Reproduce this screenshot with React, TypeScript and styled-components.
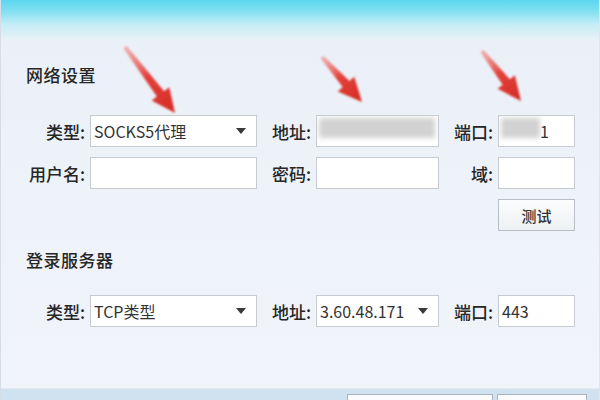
import React from 'react';
import styled, { createGlobalStyle } from 'styled-components';

const Global = createGlobalStyle`
    html, body {
        margin: 0;
        padding: 0;
        background: #eef2f9;
    }
    * { box-sizing: border-box; }
`;

const font = `"Microsoft YaHei", "Noto Sans CJK SC", "Noto Sans", sans-serif`;

const Styles = {
    Window: styled.div`
        position: relative;
        width: 600px;
        height: 400px;
        overflow: hidden;
        display: flex;
        flex-direction: column;
        background: linear-gradient(180deg, #eaf0f8 0%, #eef2f9 50%, #f1f4fa 100%);
        border-left: 1px solid #d6dde6;
        border-right: 1px solid #dfe5ec;
        font-family: ${font};
        color: #333;
    `,

    TitleBar: styled.div`
        height: 40px;
        flex-shrink: 0;
        background: linear-gradient(180deg, #5ad6ee 0%, #86e1f2 30%, #c6edf6 62%, #e9f1f8 100%);
    `,

    Content: styled.div`
        flex: 1;
        padding: 23px 0 0 20px;
    `,

    Heading: styled.h2<{ $gap: number }>`
        margin: 0 0 ${p => p.$gap}px 5px;
        font-size: 17px;
        line-height: 24px;
        font-weight: 500;
        color: #262626;
        letter-spacing: 0.5px;
    `,

    Grid: styled.div<{ $bottom: number }>`
        display: grid;
        grid-template-columns: 65px 167px 51px 123px 51px 77px;
        grid-auto-rows: 32px;
        column-gap: 4px;
        row-gap: 10px;
        margin-bottom: ${p => p.$bottom}px;
    `,

    Label: styled.label`
        display: flex;
        align-items: center;
        justify-content: flex-end;
        padding-right: 1px;
        font-size: 17px;
        font-weight: 500;
        color: #262626;
        white-space: nowrap;
    `,

    Field: styled.div`
        position: relative;
        display: flex;
        align-items: center;
        overflow: hidden;
        background: #fff;
        border: 1px solid #c6cad1;
        padding: 0 3px;
        font-size: 16px;
        color: #333;
    `,

    Caret: styled.span`
        margin-left: auto;
        margin-right: 7px;
        width: 0;
        height: 0;
        border-left: 5px solid transparent;
        border-right: 5px solid transparent;
        border-top: 6px solid #3a3a3a;
    `,

    Blur: styled.div<{ $w: string }>`
        position: absolute;
        left: 2px;
        top: 2px;
        height: 20px;
        width: ${p => p.$w};
        background: #d2d2d2;
        filter: blur(2.5px);
    `,

    Value: styled.span<{ $right?: boolean }>`
        position: relative;
        margin-left: ${p => (p.$right ? 'auto' : '0')};
        margin-right: ${p => (p.$right ? '22px' : '0')};
    `,

    Button: styled.button`
        grid-column: 6;
        font-family: ${font};
        font-size: 15px;
        font-weight: 500;
        color: #333;
        background: linear-gradient(180deg, #fbfcfd 0%, #eef1f4 100%);
        border: 1px solid #b9bec6;
        padding: 0;
    `,

    Footer: styled.div`
        height: 12px;
        flex-shrink: 0;
        display: flex;
        justify-content: flex-end;
        gap: 4px;
        padding: 5px 12px 0 0;
        background: #d0e2f0;
        border-top: 1px solid #e2ebf3;
        overflow: hidden;
    `,

    FooterButton: styled.button<{ $w: number }>`
        width: ${p => p.$w}px;
        height: 28px;
        flex-shrink: 0;
        font-family: ${font};
        font-size: 14px;
        background: #f9fbfd;
        border: 1px solid #a9b2bd;
    `,

    Overlay: styled.svg`
        position: absolute;
        left: 0;
        top: 0;
        pointer-events: none;
    `,
};

type Pt = [number, number];

const arrowPoints = (tail: Pt, tip: Pt) => {
    const dx = tip[0] - tail[0];
    const dy = tip[1] - tail[1];
    const len = Math.hypot(dx, dy);
    const ux = dx / len;
    const uy = dy / len;
    const nx = -uy;
    const ny = ux;
    const neck: Pt = [tip[0] - ux * 24, tip[1] - uy * 24];
    const at = (p: Pt, s: number): string => `${(p[0] + nx * s).toFixed(1)},${(p[1] + ny * s).toFixed(1)}`;
    return [
        at(tail, 2),
        at(neck, 4.5),
        at(neck, 11),
        `${tip[0]},${tip[1]}`,
        at(neck, -11),
        at(neck, -4.5),
        at(tail, -2),
    ].join(' ');
};

const arrows: { tail: Pt; tip: Pt }[] = [
    { tail: [124, 47], tip: [174, 113] },
    { tail: [321, 57], tip: [361, 102] },
    { tail: [481, 51], tip: [520, 101] },
];

const Arrows: React.FC = () => (
    <Styles.Overlay width={600} height={400} viewBox="0 0 600 400">
        <defs>
            <filter id="soft" x="-20%" y="-20%" width="140%" height="140%">
                <feGaussianBlur stdDeviation="0.9" />
            </filter>
        </defs>
        {arrows.map((a, i) => (
            <g key={i} filter="url(#soft)">
                <linearGradient
                    id={`ag${i}`}
                    gradientUnits="userSpaceOnUse"
                    x1={a.tail[0]}
                    y1={a.tail[1]}
                    x2={a.tip[0]}
                    y2={a.tip[1]}
                >
                    <stop offset="0" stopColor="#f08a86" stopOpacity="0.6" />
                    <stop offset="0.45" stopColor="#e3413a" />
                    <stop offset="1" stopColor="#d42b25" />
                </linearGradient>
                <polygon points={arrowPoints(a.tail, a.tip)} fill={`url(#ag${i})`} />
            </g>
        ))}
    </Styles.Overlay>
);

const App: React.FC = () => (
    <>
        <Global />
        <Styles.Window>
            <Styles.TitleBar />
            <Styles.Content>
                <Styles.Heading $gap={28}>网络设置</Styles.Heading>
                <Styles.Grid $bottom={17}>
                    <Styles.Label>类型:</Styles.Label>
                    <Styles.Field>
                        <Styles.Value>SOCKS5代理</Styles.Value>
                        <Styles.Caret />
                    </Styles.Field>
                    <Styles.Label>地址:</Styles.Label>
                    <Styles.Field>
                        <Styles.Blur $w="96%" />
                    </Styles.Field>
                    <Styles.Label>端口:</Styles.Label>
                    <Styles.Field>
                        <Styles.Blur $w="52%" />
                        <Styles.Value $right>1</Styles.Value>
                    </Styles.Field>

                    <Styles.Label>用户名:</Styles.Label>
                    <Styles.Field />
                    <Styles.Label>密码:</Styles.Label>
                    <Styles.Field />
                    <Styles.Label>域:</Styles.Label>
                    <Styles.Field />

                    <Styles.Button>测试</Styles.Button>
                </Styles.Grid>

                <Styles.Heading $gap={23}>登录服务器</Styles.Heading>
                <Styles.Grid $bottom={0}>
                    <Styles.Label>类型:</Styles.Label>
                    <Styles.Field>
                        <Styles.Value>TCP类型</Styles.Value>
                        <Styles.Caret />
                    </Styles.Field>
                    <Styles.Label>地址:</Styles.Label>
                    <Styles.Field>
                        <Styles.Value>3.60.48.171</Styles.Value>
                        <Styles.Caret />
                    </Styles.Field>
                    <Styles.Label>端口:</Styles.Label>
                    <Styles.Field>
                        <Styles.Value>443</Styles.Value>
                    </Styles.Field>
                </Styles.Grid>
            </Styles.Content>
            <Styles.Footer>
                <Styles.FooterButton $w={146}>上一步(B)</Styles.FooterButton>
                <Styles.FooterButton $w={90}>下一步(N)</Styles.FooterButton>
            </Styles.Footer>
            <Arrows />
        </Styles.Window>
    </>
);

export default App;
